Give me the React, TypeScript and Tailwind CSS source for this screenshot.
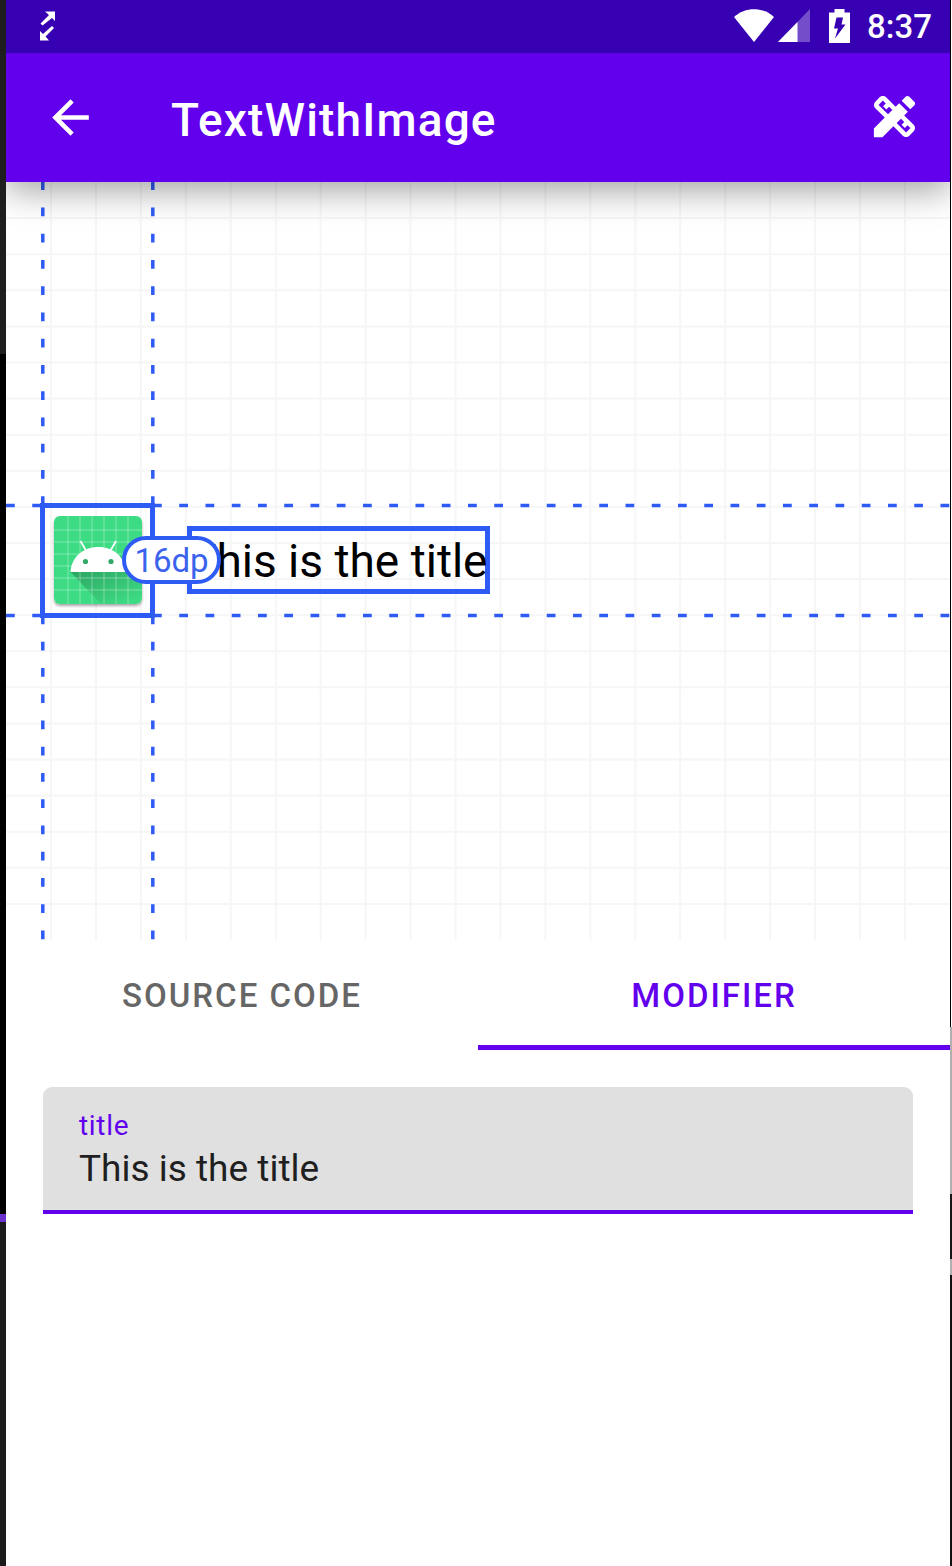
import { useState } from "react";
import { MdArrowBack } from "react-icons/md";

function StatusBar() {
  return (
    <div className="flex h-[53px] items-center justify-between bg-[#3700b3] pr-[18px] pl-[33px] text-white">
      <svg className="mb-0.5 h-[30px] w-[17px]" viewBox="0 0 17 30" fill="currentColor" aria-hidden="true">
        <path d="M6 0.500h10v9.500l-3-3-9.500 7.500-2-2L10 4z" />
        <path d="M1 20l3 3 9-8 2 2-8.500 8.500 3.500 4H1z" />
      </svg>
      <div className="flex items-center">
        <div className="mb-0.5 flex items-center">
          <svg className="h-[33px] w-[40px]" viewBox="0 0 40 33" fill="currentColor" aria-hidden="true">
            <path d="M0 8C11-2.500 29-2.500 40 8L20 33z" />
          </svg>
          <svg className="ml-1 h-[33px] w-8" viewBox="0 0 32 33" fill="currentColor" aria-hidden="true">
            <path d="M32 0v33H0z" opacity=".3" />
            <path d="M19.500 13v20H0z" />
          </svg>
          <svg className="ml-[19px] h-[34px] w-[21px]" viewBox="0 0 21 34" aria-hidden="true">
            <path d="M0 3.500h5.500V0h10v3.500H21V34H0z" fill="currentColor" />
            <path d="M7.500 8.500H14L12.500 15.500H16.500L6 29.500L9 19.500H5z" fill="#3700b3" />
          </svg>
        </div>
        <span className="ml-[17px] text-[33px] leading-none font-medium">8:37</span>
      </div>
    </div>
  );
}

function DesignIcon() {
  return (
    <svg className="size-[55px]" viewBox="0 0 24 24" fill="currentColor" aria-hidden="true">
      <path d="M16.240 11.510l1.570-1.570-3.750-3.750-1.570 1.570-4.140-4.130c-.78-.78-2.050-.78-2.830 0l-1.900 1.900c-.78.78-.78 2.050 0 2.830l4.130 4.130L3 17.250V21h3.750l4.760-4.760 4.130 4.130c.95.95 2.230.6 2.830 0l1.900-1.900c.78-.78.78-2.050 0-2.830l-4.130-4.130zm-7.060-.44L5.040 6.940l1.890-1.900L8.200 6.310 7.020 7.500l1.410 1.410 1.190-1.190 1.450 1.450-1.890 1.900zm7.880 7.890l-4.130-4.130 1.900-1.900 1.450 1.450-1.190 1.190 1.410 1.410 1.190-1.190 1.270 1.270-1.900 1.900zM20.710 7.040c.39-.39.39-1.020 0-1.410l-2.340-2.340c-.47-.47-1.120-.29-1.410 0l-1.830 1.830 3.750 3.750 1.830-1.830z" />
    </svg>
  );
}

function AppBar() {
  return (
    <header className="relative z-10 bg-[#6200ee] text-white shadow-[0_9px_32px_rgba(0,0,0,0.36)]">
      <StatusBar />
      <div className="flex h-[129px] items-center pr-7 pl-[37px]">
        <button type="button" aria-label="Back">
          <MdArrowBack className="size-[55px]" />
        </button>
        <h1 className="ml-[73px] pt-1 text-[46px] leading-none font-medium tracking-wide">TextWithImage</h1>
        <button type="button" aria-label="Design tools" className="ml-auto pb-0.5">
          <DesignIcon />
        </button>
      </div>
    </header>
  );
}

const DIVISIONS = Array.from({ length: 20 }, (_, i) => `${((i + 1) * 100) / 21}%`);

function Grid() {
  return (
    <svg className="absolute inset-0 h-full w-full" aria-hidden="true">
      <g stroke="#f6f6f6" strokeWidth="2">
        {DIVISIONS.map((p) => (
          <line key={`v${p}`} x1={p} x2={p} y1="0" y2="100%" />
        ))}
        {DIVISIONS.map((p) => (
          <line key={`h${p}`} y1={p} y2={p} x1="0" x2="100%" />
        ))}
      </g>
    </svg>
  );
}

function Guides() {
  return (
    <svg className="absolute inset-0 h-full w-full" aria-hidden="true">
      <g stroke="#2f5bf5" strokeWidth="3.5" strokeDasharray="8.75 17.5">
        <svg y="50%" overflow="visible">
          <line x1="36.8" x2="36.8" y1="-56" y2="-380" />
          <line x1="146.800" x2="146.800" y1="-56" y2="-380" />
          <line x1="36.8" x2="36.8" y1="54.500" y2="380" />
          <line x1="146.800" x2="146.800" y1="54.500" y2="380" />
          <line x1="0" x2="37" y1="-55.600" y2="-55.600" />
          <line x1="0" x2="37" y1="54.600" y2="54.600" />
          <line x1="147" x2="100%" y1="-55.600" y2="-55.600" />
          <line x1="147" x2="100%" y1="54.600" y2="54.600" />
        </svg>
      </g>
    </svg>
  );
}

const LOGO_LINES = [14, 26, 38, 50, 62, 74];

function LauncherIcon() {
  return (
    <svg
      className="size-[88px] rounded-md shadow-[0_2px_3px_rgba(0,0,0,0.35)]"
      viewBox="0 0 88 88"
      role="img"
      aria-label="Android"
    >
      <defs>
        <linearGradient id="cast" x1="0.2" y1="0" x2="0.8" y2="1">
          <stop offset="0" stopColor="#000" stopOpacity="0.3" />
          <stop offset="1" stopColor="#000" stopOpacity="0" />
        </linearGradient>
      </defs>
      <rect width="88" height="88" fill="#3ddc84" />
      <path d="M16.500 56L47 88h41V52L66 40z" fill="url(#cast)" />
      <g stroke="#fff" strokeOpacity="0.35" strokeWidth="1">
        {LOGO_LINES.map((n) => (
          <path key={n} d={`M${n} 0V88M0 ${n}H88`} />
        ))}
      </g>
      <path d="M26.500 25L32 34.500M62 25L56.500 34.500" stroke="#fff" strokeWidth="1.700" />
      <path d="M16.500 56C17.500 41 29 31 44.300 31S71 41 72 56z" fill="#fff" />
      <circle cx="31.500" cy="45.500" r="2.600" fill="#32a868" />
      <circle cx="57" cy="45.500" r="2.600" fill="#32a868" />
    </svg>
  );
}

function Preview({ title }: { title: string }) {
  return (
    <section className="relative flex h-[758px] items-center overflow-hidden pb-0.5 pl-[34px]">
      <Grid />
      <Guides />
      <div className="relative flex items-center gap-8">
        <div className="relative flex size-[115px] items-center justify-center border-[5px] border-[#2f5bf5]">
          <LauncherIcon />
          <span className="absolute left-[77px] z-10 flex h-12 w-[99px] items-center justify-center rounded-full border-4 border-[#2f5bf5] bg-white text-[33px] leading-none text-[#3b63ee]">
            16dp
          </span>
        </div>
        <div className="border-[5px] border-[#2f5bf5] pt-0.5 text-[46px] leading-[56px] whitespace-nowrap text-black">
          <p className="-mx-[3px]">{title}</p>
        </div>
      </div>
    </section>
  );
}

const TABS = ["SOURCE CODE", "MODIFIER"];

function Tabs() {
  const [active, setActive] = useState(1);
  return (
    <div role="tablist" className="grid h-[110px] grid-cols-2">
      {TABS.map((tab, i) => (
        <button
          key={tab}
          type="button"
          role="tab"
          aria-selected={i === active}
          onClick={() => setActive(i)}
          className={
            "border-b-[5px] pt-1.5 text-[33px] font-medium tracking-[2px] " +
            (i === active ? "border-[#6200ee] text-[#6200ee]" : "border-transparent text-[#666666]")
          }
        >
          {tab}
        </button>
      ))}
    </div>
  );
}

function LeftEdge() {
  return (
    <div className="flex w-1.5 flex-col bg-[#1b1b1b]" aria-hidden="true">
      <div className="h-[354px] bg-[#1e1e1e]" />
      <div className="h-[860px] bg-black" />
      <div className="h-2 bg-[#6a2fcf]" />
    </div>
  );
}

function RightEdge() {
  return (
    <div className="flex w-0.5 flex-col bg-[#111111]" aria-hidden="true">
      <div className="h-[1027px] border-l border-black bg-white" />
      <div className="h-[167px] bg-[#b0b0b0]" />
      <div className="h-[65px] bg-[#161616]" />
      <div className="h-4 bg-[#b0b0b0]" />
    </div>
  );
}

export default function App() {
  const [title, setTitle] = useState("This is the title");
  return (
    <div className="flex min-h-screen bg-white font-[Roboto,sans-serif]">
      <LeftEdge />
      <main className="min-w-0 flex-1 overflow-hidden">
        <AppBar />
        <Preview title={title} />
        <Tabs />
        <div className="p-[37px]">
          <label className="block rounded-t-[9px] border-b-4 border-[#6200ee] bg-[#e0e0e0] px-9 pt-[23px] pb-4">
            <span className="block text-[28px] leading-8 tracking-wide text-[#6200ee]">title</span>
            <input
              type="text"
              value={title}
              onChange={(e) => setTitle(e.target.value)}
              className="block h-[52px] w-full bg-transparent pt-0.5 text-[37px] text-[#1f1f1f] outline-none"
            />
          </label>
        </div>
      </main>
      <RightEdge />
    </div>
  );
}
